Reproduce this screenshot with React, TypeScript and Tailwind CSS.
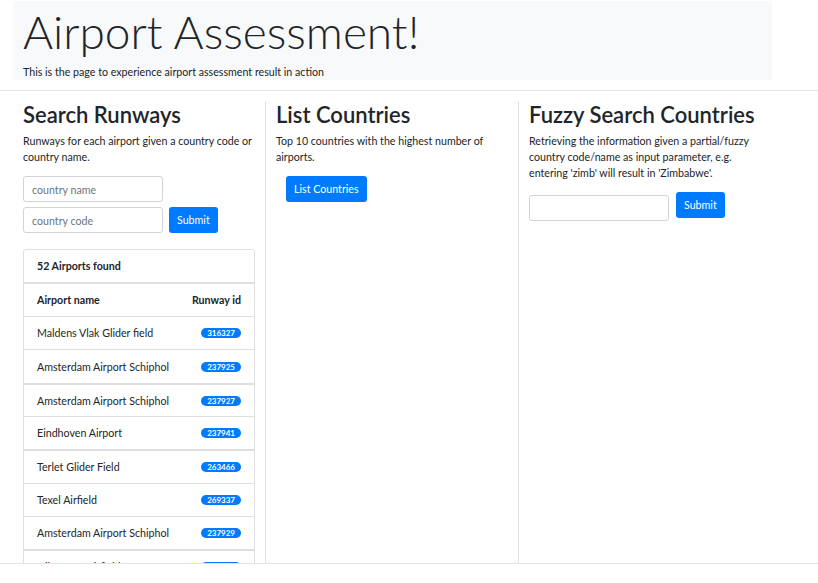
import React from "react";

const airports = [
  { name: "Maldens Vlak Glider field", id: "316327", row: "h-[33px] border-b" },
  { name: "Amsterdam Airport Schiphol", id: "237925", row: "h-[35px] border-b-2" },
  { name: "Amsterdam Airport Schiphol", id: "237927", row: "h-[32px] border-b" },
  { name: "Eindhoven Airport", id: "237941", row: "h-[34px] border-b-2" },
  { name: "Terlet Glider Field", id: "263466", row: "h-[33px] border-b" },
  { name: "Texel Airfield", id: "269337", row: "h-[33px] border-b" },
  { name: "Amsterdam Airport Schiphol", id: "237929", row: "h-[34px] border-b-2" },
  { name: "Hilversum Airfield", id: "263468", row: "h-[33px] border-b" },
  { name: "Lelystad Airport", id: "237935", row: "h-[33px] border-b" },
];

const font = "font-['Lato','Open_Sans',sans-serif]";

export default function App() {
  return (
    <div className={`${font} text-[#212529] text-[10.67px] leading-4 bg-white min-h-[583px]`}>
      {/* Jumbotron */}
      <div className="pt-px">
        <div className="ml-[13px] w-[759px] h-[79px] bg-[#f8f9fa] px-[10px]">
          <h1 className="text-[46px] font-light leading-[56px] pt-[3px]">Airport Assessment!</h1>
          <p className="text-[10.67px] leading-4 mt-[4px]">
            This is the page to experience airport assessment result in action
          </p>
        </div>
      </div>

      <hr className="mt-[10px] border-t border-[#e3e3e3]" />

      {/* Columns */}
      <div className="mt-[10px] border-b border-[#e3e3e3]">
        <div className="ml-[13px] w-[759px] h-[462px] overflow-hidden grid grid-cols-3">
          {/* Search Runways */}
          <div className="border-r border-[#dee2e6] px-[10px] pt-px">
            <h2 className="text-[22px] font-semibold leading-[26px] mb-[5px]">Search Runways</h2>
            <p className="mb-[11px]">Runways for each airport given a country code or country name.</p>
            <input
              placeholder="country name"
              className="block w-[140px] h-[26px] border border-[#ced4da] rounded-[3px] px-[8px] text-[10.67px] placeholder:text-[#6c757d]"
            />
            <div className="flex items-center gap-[6px] mt-[5px]">
              <input
                placeholder="country code"
                className="block w-[140px] h-[26px] border border-[#ced4da] rounded-[3px] px-[8px] text-[10.67px] placeholder:text-[#6c757d]"
              />
              <button className="h-[26px] px-[8px] rounded-[3px] bg-[#007bff] text-white text-[10.67px]">
                Submit
              </button>
            </div>

            <div className="mt-[16px] border border-[#dfdfdf] rounded-[3px]">
              <div className="h-[34px] border-b-2 border-[#dfdfdf] flex items-center px-[13px] font-bold">
                52 Airports found
              </div>
              <div className="h-[33px] border-b border-[#dfdfdf] flex items-center justify-between px-[13px] font-bold">
                <span>Airport name</span>
                <span>Runway id</span>
              </div>
              {airports.map((a, i) => (
                <div
                  key={i}
                  className={`${a.row} border-[#dfdfdf] flex items-center justify-between px-[13px]`}
                >
                  <span>{a.name}</span>
                  <span className="bg-[#007bff] text-white text-[8px] font-bold leading-[10px] px-[6px] rounded-full">
                    {a.id}
                  </span>
                </div>
              ))}
            </div>
          </div>

          {/* List Countries */}
          <div className="border-r border-[#dee2e6] px-[10px] pt-px">
            <h2 className="text-[22px] font-semibold leading-[26px] mb-[5px]">List Countries</h2>
            <p className="mb-[11px]">Top 10 countries with the highest number of airports.</p>
            <button className="ml-[10px] h-[26px] px-[8px] rounded-[3px] bg-[#007bff] text-white text-[10.67px]">
              List Countries
            </button>
          </div>

          {/* Fuzzy Search */}
          <div className="px-[10px] pt-px">
            <h2 className="text-[22px] font-semibold leading-[26px] mb-[5px]">Fuzzy Search Countries</h2>
            <p className="mb-[11px]">
              Retrieving the information given a partial/fuzzy country code/name as input parameter, e.g.
              entering 'zimb' will result in 'Zimbabwe'.
            </p>
            <div className="flex items-start gap-[7px]">
              <input className="mt-[3px] block w-[140px] h-[26px] border border-[#ced4da] rounded-[3px] px-[8px] text-[10.67px]" />
              <button className="h-[26px] px-[8px] rounded-[3px] bg-[#007bff] text-white text-[10.67px]">
                Submit
              </button>
            </div>
          </div>
        </div>
      </div>
    </div>
  );
}
